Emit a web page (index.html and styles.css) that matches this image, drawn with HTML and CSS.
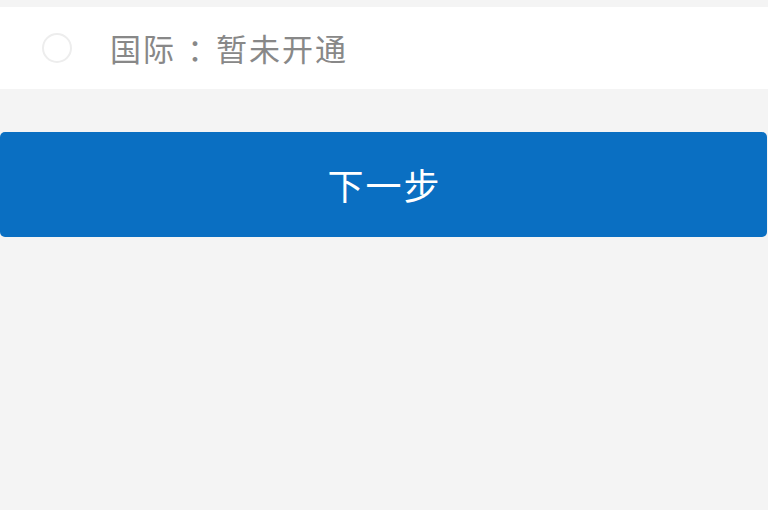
FILE: index.html
```html
<!DOCTYPE html>
<html lang="zh">
<head>
<meta charset="utf-8">
<link rel="stylesheet" href="styles.css">
</head>
<body>
<div class="page">
  <div class="option">
    <span class="radio"></span>
    <span class="label">国际<span class="colon">：</span>暂未开通</span>
  </div>
  <div class="actions">
    <button class="next">下一步</button>
  </div>
</div>
</body>
</html>
```
FILE: styles.css
```css
html, body {
  margin: 0;
  padding: 0;
  background: #f4f4f4;
  font-family: "Noto Sans CJK SC", "Noto Sans", sans-serif;
}
.page {
  width: 768px;
  height: 510px;
  padding-top: 7px;
  box-sizing: border-box;
  background: #f4f4f4;
}
.option {
  height: 82px;
  background: #ffffff;
  display: flex;
  align-items: center;
  padding-left: 42px;
  box-sizing: border-box;
}
.radio {
  width: 30px;
  height: 30px;
  border: 2px solid #ededed;
  border-radius: 50%;
  box-sizing: border-box;
  margin-top: -1px;
}
.label {
  margin-left: 38px;
  font-size: 31px;
  line-height: 1;
  color: #888888;
  letter-spacing: 2px;
  margin-top: -2px;
}
.colon {
  display: inline-block;
  width: 38px;
  margin-right: 2px;
  text-align: center;
  letter-spacing: 0;
  font-feature-settings: "halt" 1;
}
.actions {
  padding-top: 43px;
  padding-right: 1px;
}
.next {
  display: flex;
  align-items: center;
  justify-content: center;
  width: 100%;
  height: 105px;
  border: none;
  border-radius: 5px;
  background: #0a6fc2;
  color: #ffffff;
  font-family: "Noto Sans CJK SC", "Noto Sans", sans-serif;
  font-size: 36px;
  letter-spacing: 2px;
  padding: 0 0 2px 2px;
}
```
